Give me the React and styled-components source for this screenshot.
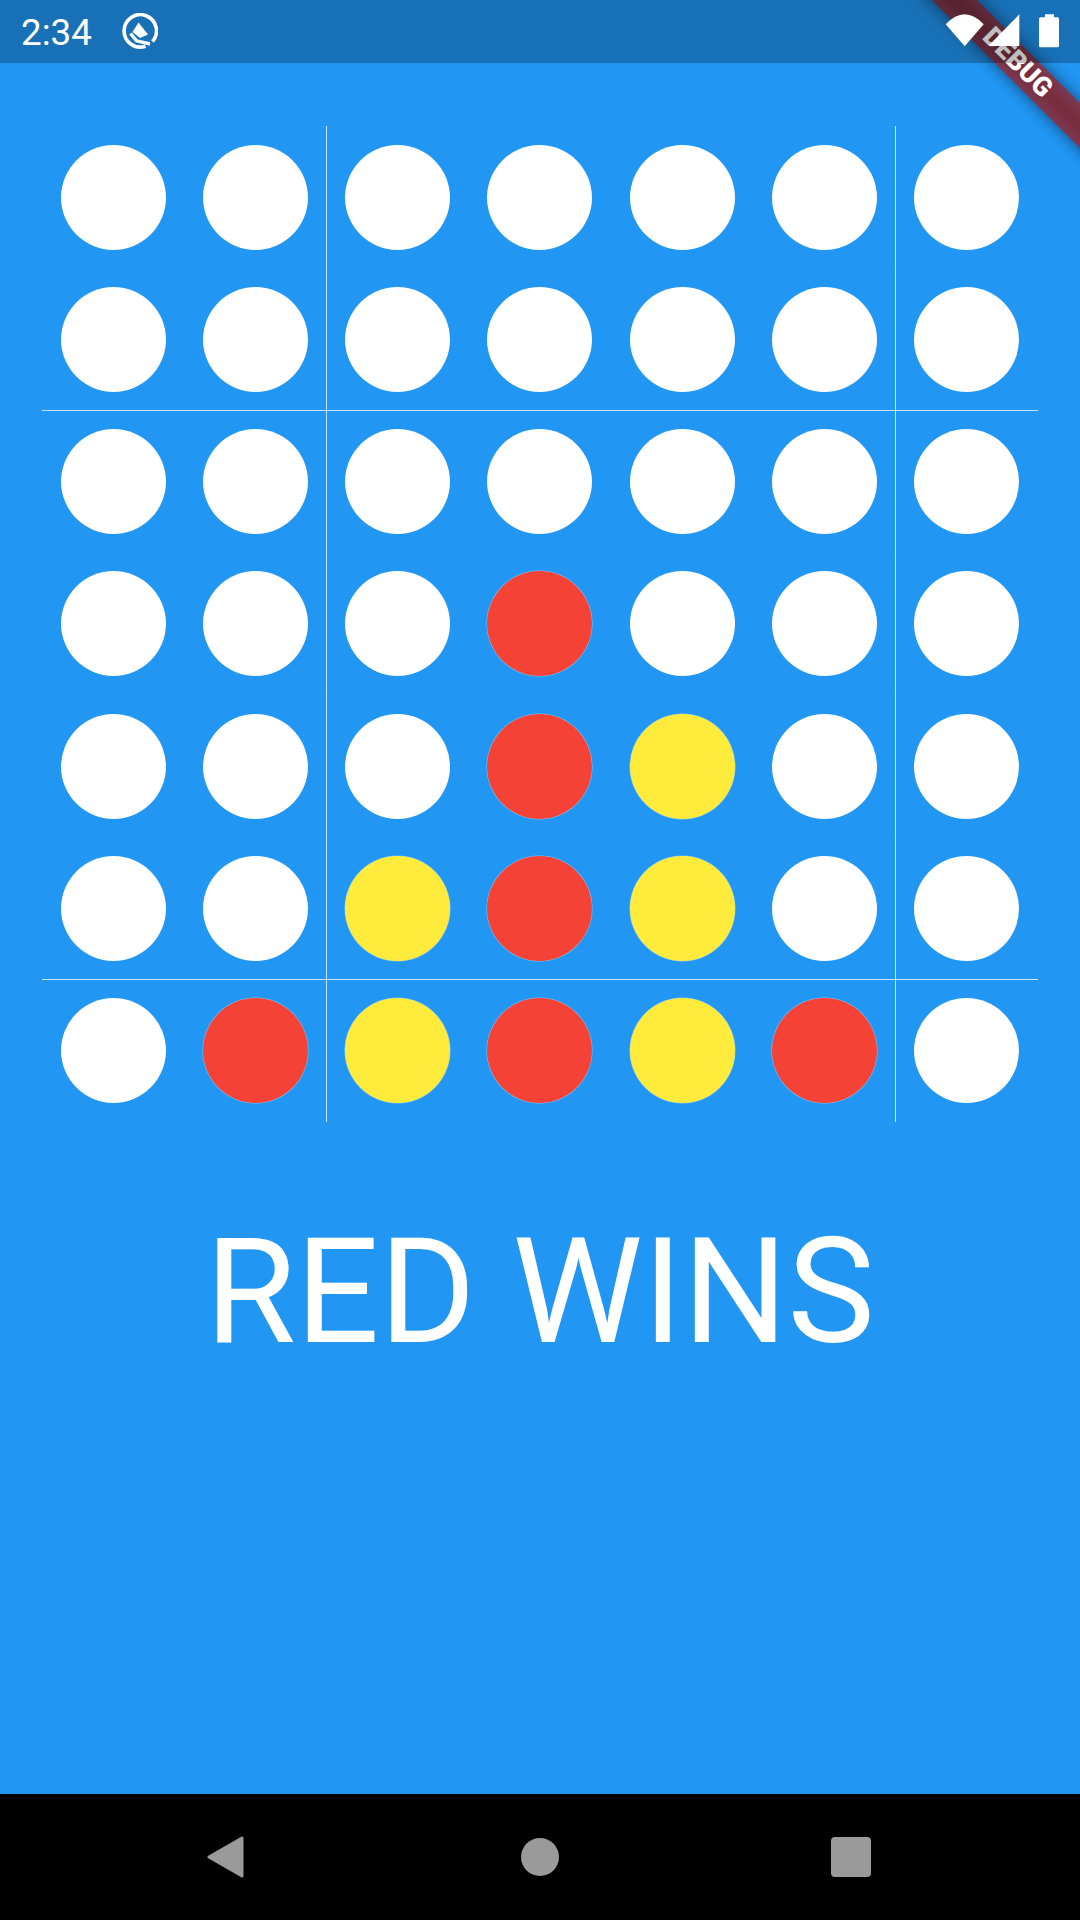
import React from 'react';
import styled, { createGlobalStyle } from 'styled-components';

const _ = null;
const R = 'red';
const Y = 'yellow';

const board = [
  [_, _, _, _, _, _, _],
  [_, _, _, _, _, _, _],
  [_, _, _, _, _, _, _],
  [_, _, _, R, _, _, _],
  [_, _, _, R, Y, _, _],
  [_, _, Y, R, Y, _, _],
  [_, R, Y, R, Y, R, _],
];

const discColors = { red: '#f44336', yellow: '#ffeb3b' };
const isStrong = (i) => i === 2 || i === 6;

export default function App() {
  return (
    <Page>
      <GlobalStyle />
      <DebugBanner>
        <span>DEBUG</span>
      </DebugBanner>
      <StatusBar>
        <Clock>2:34</Clock>
        <NotifyIcon viewBox="0 0 36 36">
          <path
            d="M30.5 28.5A16.2 16.2 0 1 0 23.5 33.2"
            fill="none"
            stroke="#fff"
            strokeWidth="3.6"
          />
          <path d="M16.5 9.5L26 21.5L18 25L10.5 19Z" fill="#fff" />
          <path
            d="M8.5 20.5L14.5 27.8L28 31"
            fill="none"
            stroke="#fff"
            strokeWidth="3.4"
          />
        </NotifyIcon>
        <SystemIcons>
          <svg width="39" height="34" viewBox="0 0 39 34">
            <path d="M0.7 10.3Q19.7 -9.7 38.7 10.3L19.7 32.3Z" fill="#fff" />
          </svg>
          <SignalIcon width="33" height="34" viewBox="0 0 33 34">
            <path d="M1.3 32L32.3 0.3V32Z" fill="#fff" />
          </SignalIcon>
          <BatteryIcon width="20" height="34" viewBox="0 0 20 34">
            <path
              d="M6 0.3H15V3.3H18.5A1.5 1.5 0 0 1 20 4.8V31.8A1.5 1.5 0 0 1 18.5 33.3H1.5A1.5 1.5 0 0 1 0 31.8V4.8A1.5 1.5 0 0 1 1.5 3.3H6Z"
              fill="#fff"
            />
          </BatteryIcon>
        </SystemIcons>
      </StatusBar>
      <Main>
        <Board>
          {board.map((row, r) =>
            row.map((disc, c) => (
              <Cell key={`${r}-${c}`} $strongLeft={isStrong(c)} $strongTop={isStrong(r)}>
                <Disc $disc={disc} />
              </Cell>
            ))
          )}
        </Board>
        <Result>RED WINS</Result>
      </Main>
      <NavBar>
        <svg width="37" height="42" viewBox="0 0 37 42">
          <path
            d="M2 21L35 2V40Z"
            fill="#9a9a9a"
            stroke="#9a9a9a"
            strokeWidth="3"
            strokeLinejoin="round"
          />
        </svg>
        <HomeButton />
        <RecentsButton />
      </NavBar>
    </Page>
  );
}

const GlobalStyle = createGlobalStyle`
  html, body {
    margin: 0;
    padding: 0;
    background: #2196f3;
  }
`;

const Page = styled.div`
  position: relative;
  display: flex;
  flex-direction: column;
  width: 1080px;
  height: 1920px;
  overflow: hidden;
  background: #2196f3;
  font-family: Roboto, 'Liberation Sans', sans-serif;
  color: #fff;
`;

const DebugBanner = styled.div`
  position: absolute;
  left: 889.75px;
  top: 47px;
  z-index: 1;
  display: flex;
  align-items: center;
  justify-content: center;
  width: 255px;
  height: 31.5px;
  transform: rotate(45deg);
  font-size: 26.8px;
  font-weight: 900;
  line-height: 1;
  &::before {
    content: '';
    position: absolute;
    inset: 0;
    background: rgba(0, 0, 0, 0.5);
    filter: blur(8px);
  }
  &::after {
    content: '';
    position: absolute;
    inset: 0;
    background: rgba(183, 28, 28, 0.627);
  }
  span {
    position: relative;
    z-index: 1;
  }
`;

const StatusBar = styled.div`
  position: relative;
  z-index: 2;
  display: flex;
  align-items: center;
  flex: none;
  height: 63px;
  padding: 0 21px 0 21px;
  box-sizing: border-box;
  background: rgba(0, 0, 0, 0.25);
`;

const Clock = styled.div`
  margin-top: 3px;
  font-size: 36.75px;
  line-height: 1;
`;

const NotifyIcon = styled.svg`
  width: 36px;
  height: 36px;
  margin-left: 30px;
  margin-top: -1px;
`;

const SystemIcons = styled.div`
  display: flex;
  align-items: flex-start;
  margin-left: auto;
  margin-top: -1px;
`;

const SignalIcon = styled.svg`
  margin-left: 3px;
`;

const BatteryIcon = styled.svg`
  margin-left: 19px;
`;

const Main = styled.div`
  flex: 1;
  display: flex;
  flex-direction: column;
  padding: 63px 42px 0;
`;

const Board = styled.div`
  display: grid;
  grid-template-columns: repeat(7, 1fr);
  grid-template-rows: repeat(7, 1fr);
  width: 996px;
  height: 996px;
  box-shadow: 1px 0 0 rgba(255, 255, 255, 0.03), 0 1px 0 rgba(255, 255, 255, 0.03);
`;

const Cell = styled.div`
  display: flex;
  align-items: center;
  justify-content: center;
  box-shadow:
    ${(p) =>
      p.$strongLeft ? '-1px 0 0 rgba(255, 255, 255, 0.75)' : 'inset 1px 0 0 rgba(255, 255, 255, 0.03)'},
    ${(p) =>
      p.$strongTop ? '0 -1px 0 rgba(255, 255, 255, 0.75)' : 'inset 0 1px 0 rgba(255, 255, 255, 0.03)'};
`;

const Disc = styled.div`
  width: 105px;
  height: 105px;
  border-radius: 50%;
  background: ${(p) => discColors[p.$disc] || '#fff'};
  box-shadow: ${(p) => (p.$disc ? '0 0 0 0.5px rgba(255, 255, 255, 0.45)' : 'none')};
`;

const Result = styled.div`
  margin-top: 84px;
  font-size: 147px;
  font-weight: 400;
  text-align: center;
  white-space: nowrap;
`;

const NavBar = styled.div`
  display: flex;
  align-items: center;
  flex: none;
  height: 126px;
  padding-left: 207px;
  background: #000;
`;

const HomeButton = styled.div`
  width: 38px;
  height: 38px;
  margin-left: 277px;
  border-radius: 50%;
  background: #9a9a9a;
`;

const RecentsButton = styled.div`
  width: 40px;
  height: 40px;
  margin-left: 272px;
  border-radius: 4px;
  background: #9a9a9a;
`;
